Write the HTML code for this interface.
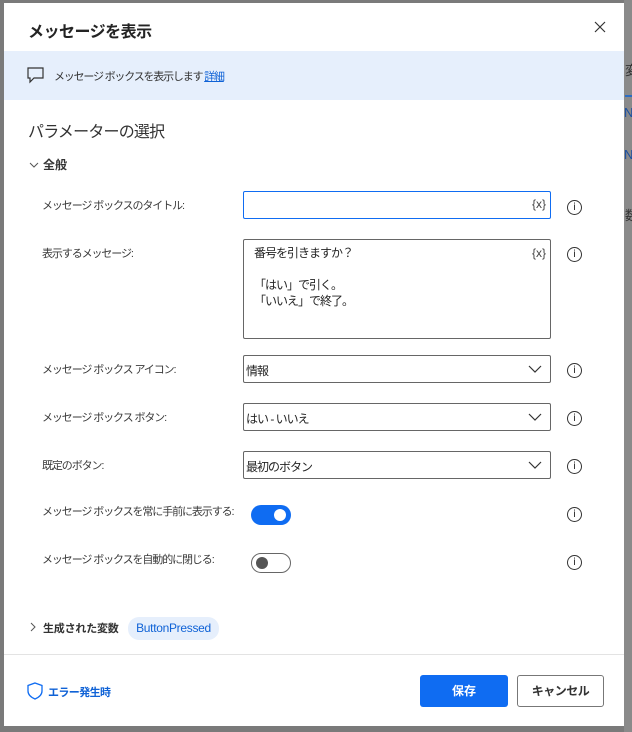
<!DOCTYPE html>
<html><head><meta charset="utf-8"><style>
*{box-sizing:border-box;margin:0;padding:0}
body{width:632px;height:732px;background:#7a7a7a;position:relative;overflow:hidden;font-family:"Liberation Sans","Noto Sans CJK JP",sans-serif;color:#242424}
.side{position:absolute;left:624px;width:8px;background:#8a8a8a}
.dlg{position:absolute;left:4px;top:3px;width:620px;height:723px;background:#fff}
.a{position:absolute;white-space:nowrap}
.t{font-size:16px;font-weight:bold;letter-spacing:-0.5px}
.band{position:absolute;left:0;top:48px;width:620px;height:49px;background:#e6effc}
.lbl{position:absolute;left:38px;font-size:11px;letter-spacing:-1.1px;color:#3a3a3a;white-space:nowrap}
.inp{position:absolute;left:239px;width:308px;border:1px solid #666;border-radius:2px;font-size:12px;letter-spacing:-1px;white-space:nowrap}
.info{position:absolute;left:563px;width:15px;height:15px;border:1px solid #333;border-radius:50%;font-size:10px;text-align:center;line-height:13px;font-family:"DejaVu Sans",sans-serif}
.x{position:absolute;right:4px;top:5px;font-size:12px;color:#444;letter-spacing:0}
.chev{position:absolute;right:8px;top:8px}
</style></head><body>
<div class="side" style="top:0;height:732px"></div>
<div class="a" style="left:625px;top:60px;font-size:13px;color:#333">変</div>
<div class="a" style="left:625px;top:95px;width:7px;height:2px;background:#2b6cc4"></div>
<div class="a" style="left:624px;top:105px;font-size:13px;color:#1a4fa0">N</div>
<div class="a" style="left:624px;top:147px;font-size:13px;color:#1a4fa0">N</div>
<div class="a" style="left:625px;top:205px;font-size:13px;color:#333">数</div>
<div class="dlg">
 <div class="a t" style="left:24px;top:15px">メッセージを表示</div>
 <svg class="a" style="left:590px;top:18px" width="12" height="12"><path d="M1 1L11 11M11 1L1 11" stroke="#333" stroke-width="1.2"/></svg>
 <div class="band">
  <svg class="a" style="left:23px;top:16px" width="18" height="17"><path d="M1 1H16V11H7L3 15V11H1Z" fill="none" stroke="#333" stroke-width="1.2"/></svg>
  <div class="a" style="left:50px;top:17px;font-size:11px;letter-spacing:-1.2px;color:#333">メッセージ ボックスを表示します <span style="color:#0f62d6;text-decoration:underline">詳細</span></div>
 </div>
 <div class="a" style="left:24px;top:115px;font-size:16px;letter-spacing:-0.8px;color:#333">パラメーターの選択</div>
 <svg class="a" style="left:25px;top:158px" width="10" height="8"><path d="M1 2L5 6L9 2" fill="none" stroke="#555" stroke-width="1"/></svg>
 <div class="a" style="left:39px;top:153px;font-size:12px;font-weight:bold;color:#333">全般</div>

 <div class="lbl" style="top:194px">メッセージ ボックスのタイトル:</div>
 <div class="inp" style="top:188px;height:28px;border-color:#0f6cf2"><span class="x">{x}</span></div>
 <div class="info" style="top:197px">i</div>

 <div class="lbl" style="top:242px">表示するメッセージ:</div>
 <div class="inp" style="top:236px;height:100px;padding:5px 10px;line-height:16px;color:#242424">番号を引きますか？<br><br>「はい」で引く。<br>「いいえ」で終了。<span class="x">{x}</span></div>
 <div class="info" style="top:244px">i</div>

 <div class="lbl" style="top:358px">メッセージ ボックス アイコン:</div>
 <div class="inp" style="top:352px;height:28px;padding:6px 2px">情報<svg class="chev" width="14" height="10"><path d="M1 2L7 8L13 2" fill="none" stroke="#333" stroke-width="1.2"/></svg></div>
 <div class="info" style="top:360px">i</div>

 <div class="lbl" style="top:406px">メッセージ ボックス ボタン:</div>
 <div class="inp" style="top:400px;height:28px;padding:6px 2px">はい - いいえ<svg class="chev" width="14" height="10"><path d="M1 2L7 8L13 2" fill="none" stroke="#333" stroke-width="1.2"/></svg></div>
 <div class="info" style="top:408px">i</div>

 <div class="lbl" style="top:454px">既定のボタン:</div>
 <div class="inp" style="top:448px;height:28px;padding:6px 2px">最初のボタン<svg class="chev" width="14" height="10"><path d="M1 2L7 8L13 2" fill="none" stroke="#333" stroke-width="1.2"/></svg></div>
 <div class="info" style="top:456px">i</div>

 <div class="lbl" style="top:500px">メッセージ ボックスを常に手前に表示する:</div>
 <div class="a" style="left:247px;top:502px;width:40px;height:20px;border-radius:10px;background:#0f6cf2"><div class="a" style="left:23px;top:4px;width:12px;height:12px;border-radius:50%;background:#fff"></div></div>
 <div class="info" style="top:504px">i</div>

 <div class="lbl" style="top:548px">メッセージ ボックスを自動的に閉じる:</div>
 <div class="a" style="left:247px;top:550px;width:40px;height:20px;border-radius:10px;border:1px solid #666"><div class="a" style="left:4px;top:3px;width:12px;height:12px;border-radius:50%;background:#555"></div></div>
 <div class="info" style="top:552px">i</div>

 <svg class="a" style="left:25px;top:619px" width="8" height="10"><path d="M2 1L6 5L2 9" fill="none" stroke="#555" stroke-width="1"/></svg>
 <div class="a" style="left:39px;top:617px;font-size:11px;letter-spacing:-0.2px;font-weight:bold;color:#333">生成された変数</div>
 <div class="a" style="left:124px;top:614px;width:91px;height:23px;border-radius:11px;background:#e6effc;color:#0f62d6;font-size:12px;letter-spacing:-0.3px;text-align:center;line-height:23px">ButtonPressed</div>

 <div class="a" style="left:0;top:651px;width:620px;height:1px;background:#e3e3e3"></div>
 <svg class="a" style="left:23px;top:679px" width="16" height="18"><path d="M8 1L15 3.5V9C15 13 11.5 15.5 8 17C4.5 15.5 1 13 1 9V3.5Z" fill="none" stroke="#0f6cf2" stroke-width="1.3"/></svg>
 <div class="a" style="left:44px;top:681px;font-size:11px;letter-spacing:-0.6px;font-weight:bold;color:#0f62d6">エラー発生時</div>
 <div class="a" style="left:416px;top:672px;width:88px;height:32px;border-radius:3px;background:#0f6cf2;color:#fff;font-size:12px;font-weight:bold;text-align:center;line-height:32px">保存</div>
 <div class="a" style="left:513px;top:672px;width:87px;height:32px;border-radius:3px;border:1px solid #777;color:#333;font-size:12px;font-weight:bold;letter-spacing:-0.5px;text-align:center;line-height:30px">キャンセル</div>
</div>
</body></html>
